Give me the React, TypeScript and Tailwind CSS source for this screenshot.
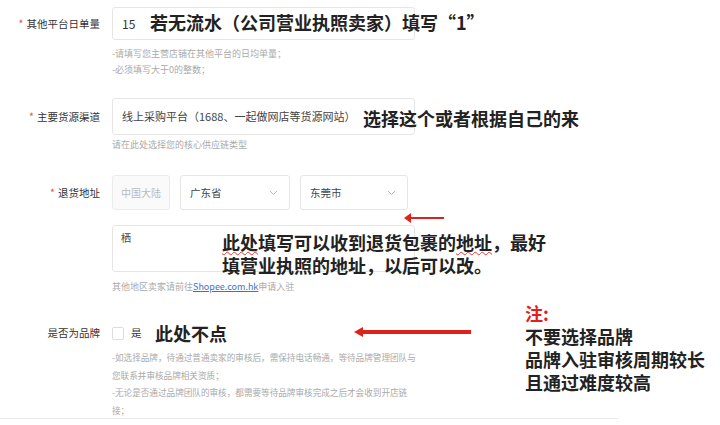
import React from 'react';

const font = { fontFamily: '"Noto Sans CJK SC", "Noto Sans", sans-serif' };

const Label = ({ text, required }: { text: string; required?: boolean }) => (
  <div className="w-[112px] shrink-0 pr-[12px] text-right text-[10.5px] text-[#333]">
    {required && <span className="mr-[3px] text-[#e8543f]">*</span>}
    {text}
  </div>
);

const Chevron = () => (
  <svg width="9" height="6" viewBox="0 0 9 6" className="text-[#bbb]">
    <path d="M1 1l3.5 3.5L8 1" fill="none" stroke="currentColor" strokeWidth="1" />
  </svg>
);

const App = () => {
  return (
    <div className="relative h-[425px] w-[720px] overflow-hidden bg-white" style={font}>
      {/* 其他平台日单量 */}
      <div className="pt-[7px]">
        <div className="flex items-center">
          <Label text="其他平台日单量" required />
          <div className="flex h-[33px] w-[303px] items-center rounded-[3px] border border-[#e6e6e6] pl-[9px] text-[12px] text-[#333]">
            15
          </div>
        </div>
        <div className="ml-[112px] mt-[6px] text-[9px] leading-[16px] text-[#aaa]">
          <div>-请填写您主营店铺在其他平台的日均单量；</div>
          <div>-必须填写大于0的整数；</div>
        </div>
      </div>

      {/* 主要货源渠道 */}
      <div className="mt-[20px]">
        <div className="flex items-center">
          <Label text="主要货源渠道" required />
          <div className="flex h-[37px] w-[303px] items-center rounded-[3px] border border-[#e6e6e6] pl-[9px] text-[11px] text-[#444]">
            线上采购平台（1688、一起做网店等货源网站）
          </div>
        </div>
        <div className="ml-[112px] mt-[2px] text-[9px] leading-[16px] text-[#aaa]">请在此处选择您的核心供应链类型</div>
      </div>

      {/* 退货地址 */}
      <div className="mt-[22px]">
        <div className="flex items-center">
          <Label text="退货地址" required />
          <div className="flex gap-[10px]">
            <div className="flex h-[35px] w-[58px] items-center justify-center rounded-[3px] border border-[#ececec] bg-[#fafafa] text-[10px] text-[#bbb]">
              中国大陆
            </div>
            <div className="flex h-[35px] w-[110px] items-center justify-between rounded-[3px] border border-[#e6e6e6] pl-[9px] pr-[11px] text-[10.5px] text-[#444]">
              广东省
              <Chevron />
            </div>
            <div className="flex h-[35px] w-[108px] items-center justify-between rounded-[3px] border border-[#e6e6e6] pl-[9px] pr-[11px] text-[10.5px] text-[#444]">
              东莞市
              <Chevron />
            </div>
          </div>
        </div>
        <div className="ml-[112px] mt-[15px] h-[47px] w-[303px] rounded-[3px] border border-[#e6e6e6] pl-[8px] pt-[4px] text-[10px] text-[#444]">
          栖
        </div>
        <div className="ml-[112px] mt-[7px] text-[9px] leading-[16px] text-[#aaa]">
          其他地区卖家请前往<span className="text-[#3b73c4] underline">Shopee.com.hk</span>申请入驻
        </div>
      </div>

      {/* 是否为品牌 */}
      <div className="mt-[28px]">
        <div className="flex h-[20px] items-center">
          <Label text="是否为品牌" />
          <div className="h-[13px] w-[12px] rounded-[2px] border border-[#ddd]" />
          <span className="ml-[7px] text-[10.5px] text-[#333]">是</span>
        </div>
        <div className="ml-[112px] mt-[6px] whitespace-nowrap text-[8.6px] leading-[17.5px] text-[#aaa]">
          <div>-如选择品牌，待通过普通卖家的审核后，需保持电话畅通，等待品牌管理团队与</div>
          <div>您联系并审核品牌相关资质；</div>
          <div>-无论是否通过品牌团队的审核，都需要等待品牌审核完成之后才会收到开店链</div>
          <div>接；</div>
        </div>
      </div>

      <div className="absolute left-0 top-[418px] h-px w-[618px] bg-[#e8e8e8]" />

      {/* annotations */}
      <div className="absolute left-[150px] top-[9px] text-[18px] font-bold leading-[26px] text-[#222]">
        若无流水（公司营业执照卖家）填写“1”
      </div>
      <div className="absolute left-[363px] top-[105px] text-[18px] font-bold leading-[26px] text-[#222]">
        选择这个或者根据自己的来
      </div>
      <div className="absolute left-[222px] top-[231px] text-[18px] font-bold leading-[23px] text-[#222]">
        <div>
          <span className="underline decoration-[#e33] decoration-wavy decoration-1">此处</span>
          填写可以收到退货包裹的
          <span className="underline decoration-[#e33] decoration-wavy decoration-1">地址</span>，最好
        </div>
        <div>填营业执照的地址，以后可以改。</div>
      </div>
      <div className="absolute left-[155px] top-[320px] text-[18px] font-bold leading-[26px] text-[#222]">此处不点</div>
      <div className="absolute left-[525px] top-[302px] text-[18px] font-bold leading-[23px] text-[#222]">
        <div className="text-[#e0201b]">注:</div>
        <div>不要选择品牌</div>
        <div>品牌入驻审核周期较长</div>
        <div>且通过难度较高</div>
      </div>

      <svg className="absolute left-[400px] top-[210px]" width="46" height="16" viewBox="0 0 46 16">
        <path d="M44 8H7" stroke="#e0201b" strokeWidth="2" />
        <path d="M4 8l7-5v10z" fill="#e0201b" />
      </svg>
      <svg className="absolute left-[350px] top-[324px]" width="124" height="16" viewBox="0 0 124 16">
        <path d="M121 8H12" stroke="#e0201b" strokeWidth="4" />
        <path d="M4 8l9-5v10z" fill="#e0201b" />
      </svg>
    </div>
  );
};

export default App;
